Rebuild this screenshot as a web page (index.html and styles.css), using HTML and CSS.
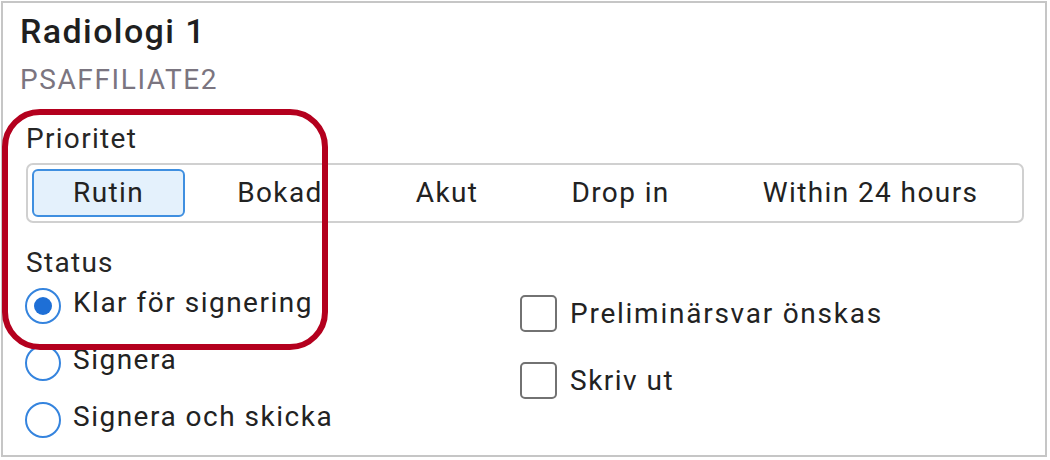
FILE: index.html
```html
<!DOCTYPE html>
<html lang="sv">
<head>
<meta charset="utf-8">
<title>Radiologi 1</title>
<link rel="stylesheet" href="styles.css">
</head>
<body>
<div class="card">
  <header class="head">
    <h1 class="title">Radiologi 1</h1>
    <div class="sub">PSAFFILIATE2</div>
  </header>
  <section class="form">
    <div class="label prio-label">Prioritet</div>
    <div class="seg">
      <button class="seg-item active">Rutin</button>
      <button class="seg-item">Bokad</button>
      <button class="seg-item">Akut</button>
      <button class="seg-item">Drop in</button>
      <button class="seg-item">Within 24 hours</button>
    </div>
    <div class="cols">
      <div class="col-left">
        <div class="label status-label">Status</div>
        <div class="radio-row">
          <span class="radio checked"><span class="dot"></span></span>
          <span class="opt radio-text">Klar för signering</span>
        </div>
        <div class="radio-row">
          <span class="radio"></span>
          <span class="opt radio-text">Signera</span>
        </div>
        <div class="radio-row">
          <span class="radio"></span>
          <span class="opt radio-text">Signera och skicka</span>
        </div>
      </div>
      <div class="col-right">
        <div class="check-row">
          <span class="check"></span>
          <span class="opt wide">Preliminärsvar önskas</span>
        </div>
        <div class="check-row">
          <span class="check"></span>
          <span class="opt">Skriv ut</span>
        </div>
      </div>
    </div>
  </section>
</div>
<div class="highlight"></div>
</body>
</html>
```

FILE: styles.css
```css
* { box-sizing: border-box; }
html, body { margin: 0; padding: 0; background: #fff; }
body {
  font-family: Roboto, "Liberation Sans", Arial, sans-serif;
  color: #222;
  width: 1050px;
  height: 460px;
  overflow: hidden;
}
.card {
  margin: 1px 0 0 1px;
  width: 1046px;
  height: 456px;
  border: 2px solid #c6c6c6;
  background: #fff;
}
.head {
  padding: 8px 0 0 17px;
}
.title {
  margin: 0;
  font-size: 34px;
  line-height: 40px;
  font-weight: 500;
  letter-spacing: 1.4px;
  color: #1f1f1f;
}
.sub {
  margin-top: 13px;
  font-size: 28px;
  line-height: 32px;
  letter-spacing: 1.6px;
  color: #7b7580;
}
.form {
  padding: 0 21px 0 23px;
}
.label {
  font-size: 28px;
  letter-spacing: 1.3px;
  color: #262626;
}
.prio-label {
  margin-top: 27px;
  line-height: 32px;
}
.seg {
  margin-top: 8px;
  height: 60px;
  border: 2px solid #d0d0d0;
  border-radius: 7px;
  padding: 4px;
  display: flex;
  gap: 11px;
}
.seg-item {
  flex: none;
  white-space: nowrap;
  height: 48px;
  padding: 0 39px;
  border: 2px solid transparent;
  border-radius: 6px;
  background: transparent;
  font-family: Roboto, "Liberation Sans", Arial, sans-serif;
  font-size: 28px;
  line-height: 44px;
  letter-spacing: 1.4px;
  color: #222;
  margin: 0;
}
.seg-item.active {
  background: #e4f1fc;
  border-color: #3f8fe0;
}
.cols {
  display: grid;
  grid-template-columns: 494px 1fr;
  margin-top: 26px;
}
.status-label {
  line-height: 28px;
}
.radio-row {
  height: 57px;
  display: flex;
  align-items: center;
  gap: 12px;
  margin-left: -1px;
}
.radio {
  width: 36px;
  height: 36px;
  border: 2px solid #3584de;
  border-radius: 50%;
  display: flex;
  align-items: center;
  justify-content: center;
  flex: none;
}
.radio .dot {
  width: 18px;
  height: 18px;
  border-radius: 50%;
  background: #1e6fd6;
}
.opt {
  font-size: 28px;
  line-height: 36px;
  letter-spacing: 1.5px;
  color: #222;
  white-space: nowrap;
}
.opt.wide {
  letter-spacing: 1.75px;
}
.radio-text {
  margin-top: -6px;
}
.col-right {
  padding-top: 31px;
}
.check-row {
  height: 67px;
  display: flex;
  align-items: center;
  gap: 13px;
}
.check {
  width: 37px;
  height: 37px;
  border: 2.5px solid #727272;
  border-radius: 5px;
  flex: none;
}
.highlight {
  position: absolute;
  left: 2px;
  top: 109px;
  width: 326px;
  height: 241px;
  border: 6px solid #b4001e;
  border-radius: 38px;
  pointer-events: none;
}
```
